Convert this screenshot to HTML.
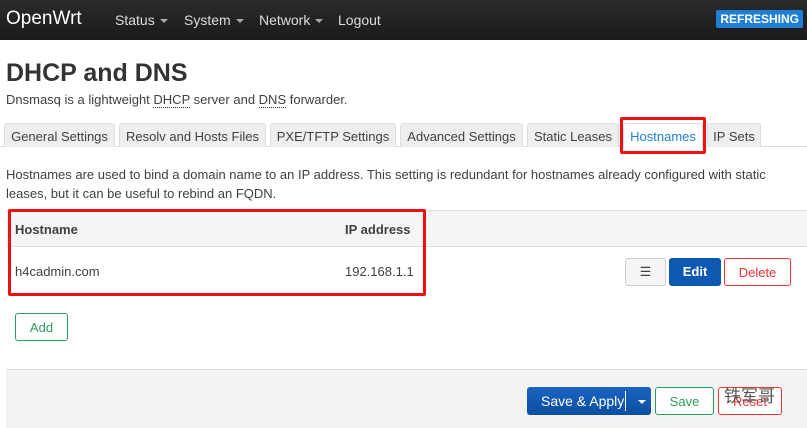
<!DOCTYPE html>
<html><head><style>
*{box-sizing:border-box;margin:0;padding:0}
body{width:807px;height:428px;overflow:hidden;font-family:"Liberation Sans",Arial,sans-serif;color:#404040;background:#fff;position:relative;font-size:13px}
.nav{height:40px;background:linear-gradient(#2b2b2b,#1a1a1a);position:relative}
.nav .brand{position:absolute;left:6px;top:8px;color:#fff;font-size:19px}
.nav .m{position:absolute;top:12px;color:#ddd;font-size:14px}
.car{display:inline-block;border-left:4px solid transparent;border-right:4px solid transparent;border-top:4px solid #aaa;vertical-align:middle;margin-left:5px}
.ref{position:absolute;right:4px;top:10px;background:#1e7fd6;color:#fff;font-weight:bold;font-size:12px;padding:2px 4px;border-radius:2px}
h1{position:absolute;left:6px;top:59px;font-size:25px;color:#333;font-weight:bold}
.desc{position:absolute;left:6px;top:92px;font-size:13px}
abbr{border-bottom:1px dotted #333;text-decoration:none}
.tabs{position:absolute;left:0;top:122px;width:807px;height:25px;border-bottom:1px solid #ddd}
.tab{position:absolute;top:1px;height:24px;background:#eee;border:1px solid #ddd;border-bottom:none;border-radius:3px 3px 0 0;font-size:13px;padding-top:5px;text-align:center}
.tab.act{background:#fff;color:#1e7fd6;height:25px}
.p{position:absolute;left:6px;top:165px;font-size:13px;line-height:19px;width:790px}
.thead{position:absolute;left:6px;top:210px;width:801px;height:37px;background:#f5f5f5;border-top:1px solid #ddd;border-bottom:1px solid #ddd;font-weight:bold}
.btn{position:absolute;border-radius:3px;font-size:13px;text-align:center}
.red{position:absolute;border:3px solid #ee1111;border-radius:2px}
.foot{position:absolute;left:6px;top:369px;width:801px;height:59px;background:#f3f3f3;border-top:1px solid #ddd}
</style></head><body>
<div class="nav"><span class="brand">OpenWrt</span>
<span class="m" style="left:115px">Status<span class="car"></span></span>
<span class="m" style="left:184px">System<span class="car"></span></span>
<span class="m" style="left:259px">Network<span class="car"></span></span>
<span class="m" style="left:338px">Logout</span>
<span class="ref">REFRESHING</span></div>
<h1>DHCP and DNS</h1>
<div class="desc">Dnsmasq is a lightweight <abbr>DHCP</abbr> server and <abbr>DNS</abbr> forwarder.</div>
<div class="tabs">
<div class="tab" style="left:4px;width:111px">General Settings</div>
<div class="tab" style="left:119px;width:147px">Resolv and Hosts Files</div>
<div class="tab" style="left:270px;width:126px">PXE/TFTP Settings</div>
<div class="tab" style="left:400px;width:123px">Advanced Settings</div>
<div class="tab" style="left:527px;width:92px">Static Leases</div>
<div class="tab act" style="left:623px;width:80px">Hostnames</div>
<div class="tab" style="left:707px;width:54px">IP Sets</div>
</div>
<div class="red" style="left:620px;top:117px;width:86px;height:37px"></div>
<div class="p">Hostnames are used to bind a domain name to an IP address. This setting is redundant for hostnames already configured with static leases, but it can be useful to rebind an FQDN.</div>
<div class="thead"><span style="position:absolute;left:9px;top:11px">Hostname</span><span style="position:absolute;left:339px;top:11px">IP address</span></div>
<div style="position:absolute;left:15px;top:264px">h4cadmin.com</div>
<div style="position:absolute;left:345px;top:264px">192.168.1.1</div>
<div class="red" style="left:8px;top:209px;width:418px;height:87px"></div>
<div class="btn" style="left:625px;top:258px;width:41px;height:28px;border:1px solid #ccc;background:#f5f5f5;padding-top:5px">☰</div>
<div class="btn" style="left:669px;top:258px;width:52px;height:28px;background:#0d58b0;color:#fff;font-weight:bold;padding-top:6px">Edit</div>
<div class="btn" style="left:724px;top:258px;width:67px;height:28px;border:1px solid #e33;color:#e33;padding-top:6px">Delete</div>
<div class="btn" style="left:15px;top:313px;width:53px;height:28px;border:1px solid #2a9d5c;color:#2a9d5c;padding-top:6px">Add</div>
<div class="foot"></div>
<div class="btn" style="left:527px;top:387px;width:124px;height:28px;background:linear-gradient(#1a63c2,#0d4fa0);color:#fff;font-size:14px;padding-top:6px;text-align:left;padding-left:14px">Save &amp; Apply<span style="position:absolute;left:98px;top:4px;height:20px;border-left:1px solid #fff"></span><span class="car" style="position:absolute;left:106px;top:13px;border-top-color:#fff"></span></div>
<div class="btn" style="left:655px;top:387px;width:59px;height:28px;border:1px solid #2a9d5c;color:#2a9d5c;background:#fff;padding-top:6px">Save</div>
<div class="btn" style="left:718px;top:387px;width:64px;height:28px;border:1px solid #e33;color:#e33;background:#fff;padding-top:6px">Reset</div>
<div style="position:absolute;left:724px;top:382px;font-family:'Noto Sans CJK SC',sans-serif;font-size:17px;color:#555">铁军哥</div>
</body></html>
